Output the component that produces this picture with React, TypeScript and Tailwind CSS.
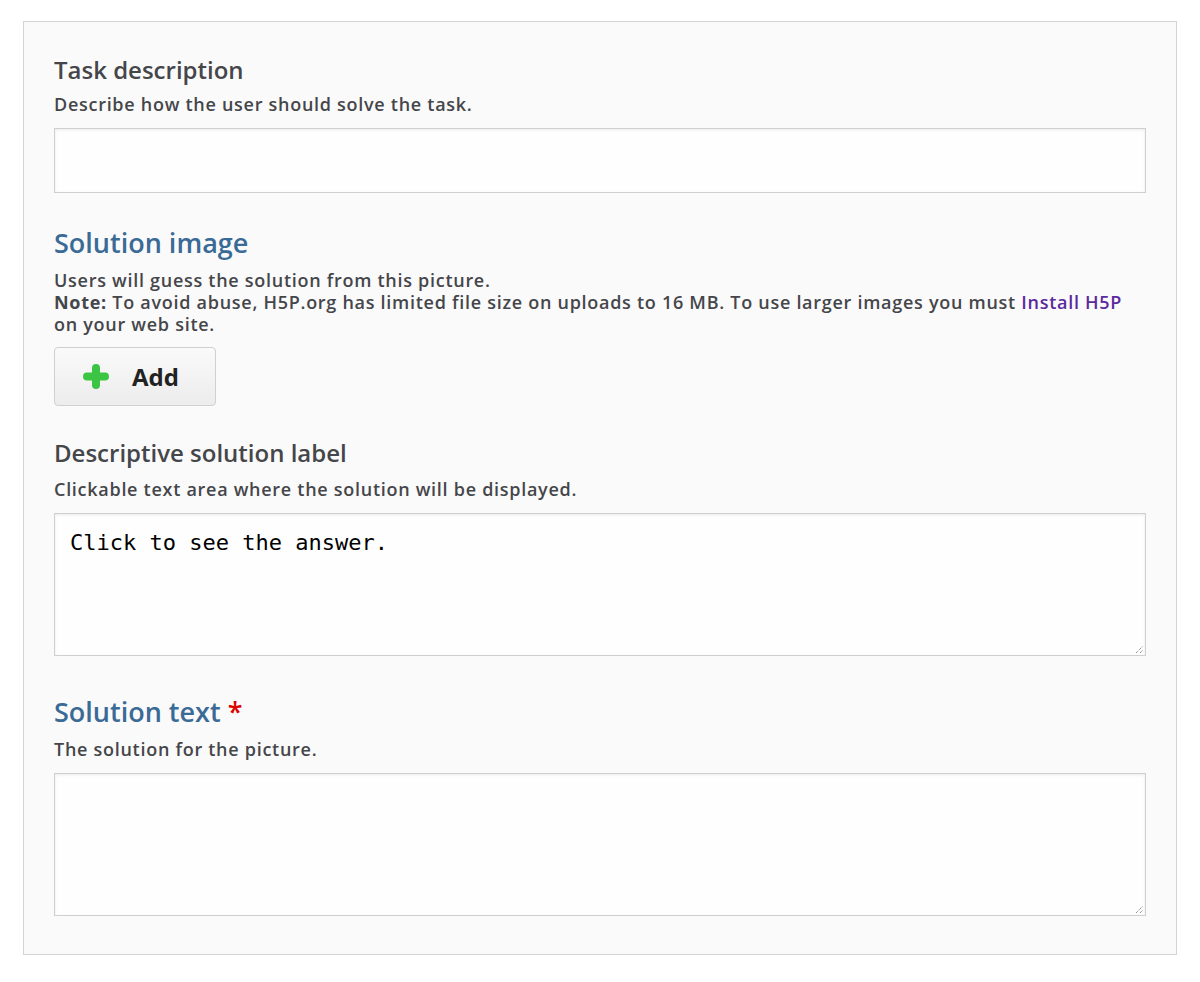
import React from 'react';

const font = { fontFamily: '"Open Sans", "Noto Sans", sans-serif' };

function Label({ children, blue, required }: { children: React.ReactNode; blue?: boolean; required?: boolean }) {
  return (
    <div className={`${blue ? 'text-[27px] leading-[34px] text-[#3a6a96]' : 'text-[24px] leading-[32px] text-[#45464a]'} font-semibold`}>
      {children}
      {required && <span className="text-[#dd0000] ml-[7px]">*</span>}
    </div>
  );
}

function Desc({ children }: { children: React.ReactNode }) {
  return <div className="text-[18px] leading-[22px] font-semibold text-[#45464a] tracking-[0.72px]">{children}</div>;
}

function Box({ h, resize, children }: { h: string; resize?: boolean; children?: React.ReactNode }) {
  return (
    <div className={`relative ${h} w-full bg-[#fefefe] border border-[#cfcfcf] shadow-[inset_0_1px_3px_rgba(0,0,0,0.08)] px-[15px] pt-[15px]`}>
      {children}
      {resize && (
        <svg className="absolute right-[1px] bottom-[1px]" width="9" height="9" viewBox="0 0 9 9">
          <path d="M1 8 L8 1 M5 8 L8 5" stroke="#666" strokeWidth="1" strokeDasharray="1 1" />
        </svg>
      )}
    </div>
  );
}

export default function App() {
  return (
    <div className="min-h-screen bg-white pt-[21px] px-[23px]" style={font}>
      <div className="bg-[#fafafa] border border-[#d3d3d3] px-[30px] pt-[32px] pb-[38px]">
        <Label>Task description</Label>
        <div className="mt-[7px]">
          <Desc>Describe how the user should solve the task.</Desc>
        </div>
        <div className="mt-[13px]">
          <Box h="h-[65px]" />
        </div>

        <div className="mt-[33px]">
          <Label blue>Solution image</Label>
        </div>
        <div className="mt-[9px]">
          <Desc>
            Users will guess the solution from this picture.
            <br />
            <b className="font-bold">Note:</b> To avoid abuse, H5P.org has limited file size on uploads to 16 MB. To use larger images you must{' '}
            <span className="text-[#5b2a9e]">Install H5P</span> on your web site.
          </Desc>
        </div>
        <div className="mt-[12px]">
          <button className="flex items-center w-[162px] h-[59px] rounded-[4px] border border-[#d0d0d0] bg-gradient-to-b from-[#fafafa] to-[#ececec] pl-[28px]">
            <svg width="26" height="25" viewBox="0 0 26 25">
              <path d="M13 4 V21 M4 12.5 H22" stroke="#3cc444" strokeWidth="8" strokeLinecap="round" />
            </svg>
            <span className="ml-[23px] text-[24px] font-bold text-[#222]">Add</span>
          </button>
        </div>

        <div className="mt-[31px]">
          <Label>Descriptive solution label</Label>
        </div>
        <div className="mt-[9px]">
          <Desc>Clickable text area where the solution will be displayed.</Desc>
        </div>
        <div className="mt-[13px]">
          <Box h="h-[143px]" resize>
            <div className="text-[22px] leading-[28px] text-black" style={{ fontFamily: '"DejaVu Sans Mono", monospace' }}>
              Click to see the answer.
            </div>
          </Box>
        </div>

        <div className="mt-[39px]">
          <Label blue required>Solution text</Label>
        </div>
        <div className="mt-[9px]">
          <Desc>The solution for the picture.</Desc>
        </div>
        <div className="mt-[13px]">
          <Box h="h-[143px]" resize />
        </div>
      </div>
    </div>
  );
}
